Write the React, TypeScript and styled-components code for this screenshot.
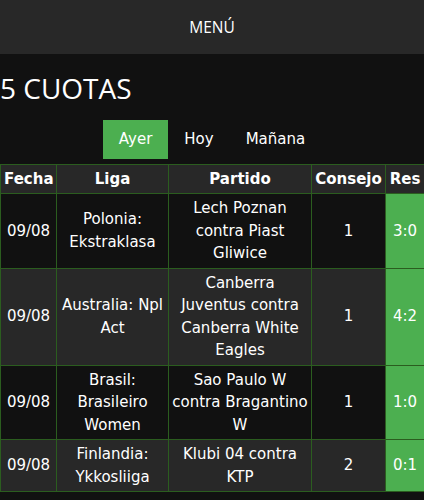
import React from 'react'
import styled, { createGlobalStyle } from 'styled-components'

const GlobalStyle = createGlobalStyle`
  html, body {
    margin: 0;
    padding: 0;
    background: #111111;
    color: #ffffff;
    font-family: "DejaVu Sans", Verdana, sans-serif;
  }
`

const Page = styled.div`
  width: 424px;
  overflow: hidden;
`

const MenuBar = styled.div`
  height: 54px;
  background: #282828;
  display: flex;
  align-items: center;
  justify-content: center;
  font-family: "Open Sans", "Noto Sans", sans-serif;
  font-size: 15.5px;
  color: #ffffff;
`

const Title = styled.h1`
  margin: 15px 0 13px 0;
  font-family: "Open Sans", "Noto Sans", sans-serif;
  font-size: 28px;
  font-weight: 400;
  line-height: 38px;
`

const Tabs = styled.div`
  display: flex;
  justify-content: center;
  margin-bottom: 5px;
`

const Tab = styled.div<{ $active?: boolean }>`
  padding: 8px 16px;
  font-size: 15px;
  line-height: 22.5px;
  background: ${p => (p.$active ? '#4caf50' : 'transparent')};
  color: #ffffff;
`

const Table = styled.table`
  width: 424px;
  border-collapse: collapse;
  table-layout: fixed;
  font-size: 15px;
  line-height: 22.5px;
`

const Th = styled.th`
  background: #282828;
  border: 1px solid #2b5d1f;
  padding: 3px;
  font-weight: 700;
  text-align: center;
`

const Row = styled.tr<{ $even?: boolean }>`
  background: ${p => (p.$even ? '#282828' : '#111111')};
`

const Td = styled.td<{ $result?: boolean }>`
  border: 1px solid #2b5d1f;
  padding: 3px;
  text-align: center;
  vertical-align: middle;
  background: ${p => (p.$result ? '#4caf50' : 'inherit')};
`

const matches = [
  { date: '09/08', league: 'Polonia: Ekstraklasa', match: 'Lech Poznan contra Piast Gliwice', tip: '1', res: '3:0' },
  { date: '09/08', league: 'Australia: Npl Act', match: 'Canberra Juventus contra Canberra White Eagles', tip: '1', res: '4:2' },
  { date: '09/08', league: 'Brasil: Brasileiro Women', match: 'Sao Paulo W contra Bragantino W', tip: '1', res: '1:0' },
  { date: '09/08', league: 'Finlandia: Ykkosliiga', match: 'Klubi 04 contra KTP', tip: '2', res: '0:1' },
]

export default function App(): JSX.Element {
  return (
    <Page>
      <GlobalStyle />
      <MenuBar>MENÚ</MenuBar>
      <Title>5 CUOTAS</Title>
      <Tabs>
        <Tab $active>Ayer</Tab>
        <Tab>Hoy</Tab>
        <Tab>Mañana</Tab>
      </Tabs>
      <Table>
        <colgroup>
          <col style={{ width: 56 }} />
          <col style={{ width: 112 }} />
          <col style={{ width: 143 }} />
          <col style={{ width: 74 }} />
          <col style={{ width: 39 }} />
        </colgroup>
        <thead>
          <tr>
            <Th>Fecha</Th>
            <Th>Liga</Th>
            <Th>Partido</Th>
            <Th>Consejo</Th>
            <Th>Res</Th>
          </tr>
        </thead>
        <tbody>
          {matches.map((m, i) => (
            <Row key={i} $even={i % 2 === 1}>
              <Td>{m.date}</Td>
              <Td>{m.league}</Td>
              <Td>{m.match}</Td>
              <Td>{m.tip}</Td>
              <Td $result>{m.res}</Td>
            </Row>
          ))}
        </tbody>
      </Table>
    </Page>
  )
}
